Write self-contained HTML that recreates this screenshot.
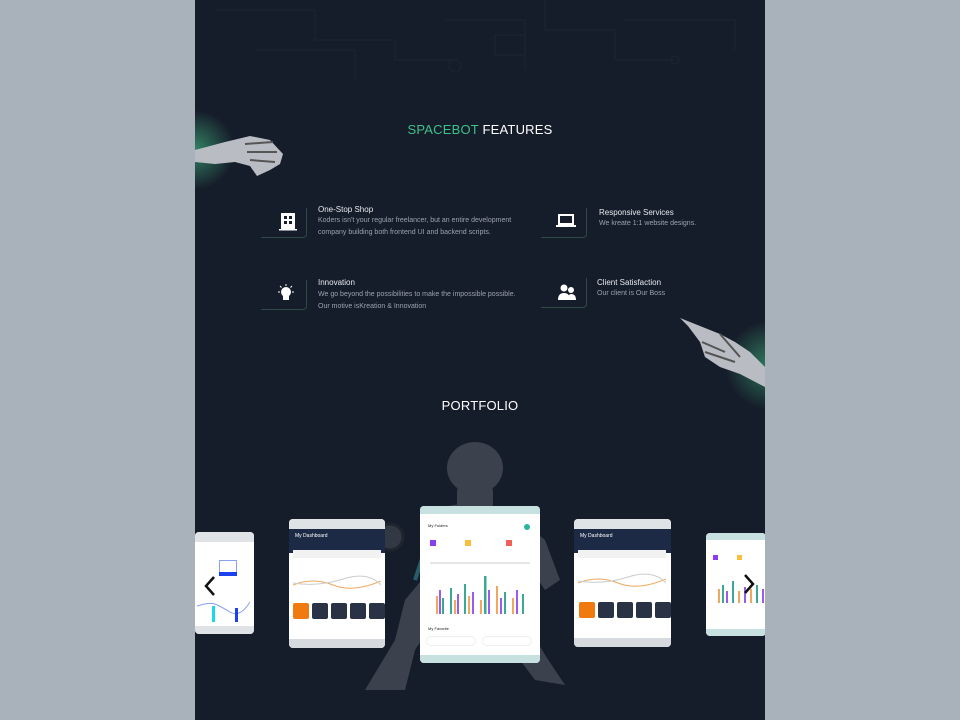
<!DOCTYPE html>
<html><head><meta charset="utf-8">
<style>
*{margin:0;padding:0;box-sizing:border-box}
body{width:960px;height:720px;background:#a9b2bb;font-family:"Liberation Sans",sans-serif;position:relative;overflow:hidden}
#page{position:absolute;left:195px;top:0;width:570px;height:720px;background:#161d2a;overflow:hidden}
.abs{position:absolute}
.h{position:absolute;font-size:13px;color:#fff;letter-spacing:.2px}
.ft{position:absolute;color:#e6e9ee;font-size:8px}
.fd{position:absolute;color:#9aa2ad;font-size:7px;line-height:12px}
.ib{position:absolute;width:46px;height:30px;border-right:1px solid #2e4a45;border-bottom:1px solid #2e4a45;border-radius:0 0 4px 0}
.card{position:absolute;background:#fff;border-radius:4px;overflow:hidden}
</style></head><body>
<div id="page">
 <svg class="abs" style="left:0;top:0" width="570" height="90">
  <g stroke="#1c2431" fill="none" stroke-width="1.2">
   <path d="M20 10H120V40H200V60H260"/><path d="M350 0V30H420V60H480"/><path d="M250 20H330V70"/><path d="M430 20H540V50"/><circle cx="260" cy="66" r="6"/><circle cx="480" cy="60" r="4"/><path d="M60 50H160V80"/><rect x="300" y="35" width="30" height="20"/>
  </g>
 </svg>
 <div class="abs" style="left:-40px;top:110px;width:80px;height:80px;border-radius:50%;background:radial-gradient(circle,rgba(70,200,140,.6),rgba(22,29,42,0) 70%)"></div>
 <div class="abs" style="left:530px;top:320px;width:90px;height:90px;border-radius:50%;background:radial-gradient(circle,rgba(70,200,140,.55),rgba(22,29,42,0) 70%)"></div>
 <svg class="abs" style="left:0;top:132px" width="95" height="50"><path d="M0 18 L30 10 L55 4 L75 8 L88 22 L85 32 L75 38 L62 44 L55 34 L40 30 L20 32 L0 30Z" fill="#b9bdc3"/><path d="M50 12 L78 10 M52 20 L82 20 M55 28 L80 30" stroke="#555" stroke-width="2"/></svg>
 <svg class="abs" style="left:485px;top:312px" width="85" height="75"><path d="M0 6 L20 14 L40 22 L55 30 L70 40 L85 55 L85 75 L60 62 L40 55 L25 45 L20 30 L8 14Z" fill="#b9bdc3"/><path d="M22 30 L45 40 M25 40 L55 50 M40 22 L60 45" stroke="#555" stroke-width="2"/></svg>
 <div class="h" style="left:0;width:570px;text-align:center;top:122px"><span style="color:#3dc08a">SPACEBOT</span> FEATURES</div>

 <div class="ib" style="left:66px;top:208px"></div>
 <svg class="abs" style="left:84px;top:211px" width="18" height="20"><rect x="2" y="2" width="14" height="16" fill="#fff"/><rect x="5" y="5" width="3" height="3" fill="#161d2a"/><rect x="10" y="5" width="3" height="3" fill="#161d2a"/><rect x="5" y="10" width="3" height="3" fill="#161d2a"/><rect x="10" y="10" width="3" height="3" fill="#161d2a"/><rect x="0" y="18" width="18" height="1.5" fill="#fff"/></svg>
 <div class="ft" style="left:123px;top:205px">One-Stop Shop</div>
 <div class="fd" style="left:123px;top:215px">Koders isn't your regular freelancer, but an entire development<br>company building both frontend UI and backend scripts.</div>

 <div class="ib" style="left:346px;top:208px"></div>
 <svg class="abs" style="left:361px;top:213px" width="20" height="16"><rect x="2" y="1" width="16" height="11" fill="#fff"/><rect x="4" y="3" width="12" height="7" fill="#161d2a"/><rect x="0" y="12" width="20" height="2" fill="#fff"/></svg>
 <div class="ft" style="left:404px;top:208px">Responsive Services</div>
 <div class="fd" style="left:404px;top:218px">We kreate 1:1 website designs.</div>

 <div class="ib" style="left:66px;top:280px"></div>
 <svg class="abs" style="left:82px;top:284px" width="18" height="18"><circle cx="9" cy="8" r="5" fill="#fff"/><rect x="6" y="12" width="6" height="4" fill="#fff"/><g stroke="#fff" stroke-width="1"><path d="M9 0V2M1 8H3M15 8H17M3 2L4.5 3.5M15 2L13.5 3.5"/></g></svg>
 <div class="ft" style="left:123px;top:278px">Innovation</div>
 <div class="fd" style="left:123px;top:289px">We go beyond the possibilities to make the impossible possible.<br>Our motive isKreation &amp; Innovation</div>

 <div class="ib" style="left:346px;top:278px"></div>
 <svg class="abs" style="left:362px;top:283px" width="20" height="18"><circle cx="7" cy="5" r="3.5" fill="#fff"/><circle cx="14" cy="7" r="3" fill="#fff"/><path d="M1 17Q1 10 7 10Q13 10 13 17Z" fill="#fff"/><path d="M11 17Q11 11 14 11Q19 11 19 17Z" fill="#fff"/></svg>
 <div class="ft" style="left:402px;top:278px">Client Satisfaction</div>
 <div class="fd" style="left:402px;top:288px">Our client is Our Boss</div>

 <div class="h" style="left:0;width:570px;text-align:center;top:398px">PORTFOLIO</div>

 <svg class="abs" style="left:140px;top:440px" width="240" height="260" opacity=".8">
  <g fill="#454c58">
   <ellipse cx="140" cy="28" rx="28" ry="26"/>
   <rect x="122" y="40" width="36" height="35" rx="12"/>
   <path d="M100 70 Q140 55 180 75 L210 100 L225 140 L210 150 L190 120 L170 110 L160 170 L120 175 L95 130 L70 160 L60 200 L30 250 L70 250 L80 210 L100 180 L130 190 L170 200 L200 240 L230 245 L210 215 L190 180 L170 150 L100 90Z"/>
  </g>
  <path d="M100 80 L90 110 L80 140 M180 90 L200 110" stroke="#2b6f7a" stroke-width="4" fill="none"/>
  <circle cx="55" cy="97" r="13" fill="#3a414c" stroke="#22282f" stroke-width="3"/>
 </svg>

 <div class="card" style="left:0;top:532px;width:59px;height:102px">
  <div class="abs" style="left:0;top:0;width:59px;height:10px;background:#dfe3e6"></div>
  <div class="abs" style="left:0;bottom:0;width:59px;height:8px;background:#dfe3e6"></div>
  <div class="abs" style="left:24px;top:28px;width:18px;height:16px;border:1px solid #8aa0f0"></div>
  <div class="abs" style="left:24px;top:40px;width:18px;height:4px;background:#1d40f0"></div>
  <svg class="abs" style="left:0;top:62px" width="59" height="30"><path d="M2 12 Q15 8 20 10 T35 18 T55 8" stroke="#8aa0f0" fill="none"/><rect x="17" y="12" width="3" height="16" fill="#18d8f0"/><rect x="40" y="14" width="3" height="14" fill="#1d40f0"/></svg>
 </div>
 <div class="card" style="left:94px;top:519px;width:96px;height:129px">
  <div class="abs" style="left:0;top:0;width:96px;height:10px;background:#dfe3e6"></div>
  <div class="abs" style="left:0;top:10px;width:96px;height:24px;background:#1d2a45"></div>
  <div class="abs" style="left:6px;top:14px;font-size:5px;color:#fff">My Dashboard</div>
  <div class="abs" style="left:4px;top:31px;width:88px;height:8px;background:#f2f2f2"></div>
  <svg class="abs" style="left:4px;top:52px" width="88" height="20"><path d="M0 14 Q20 6 40 14 T88 10" stroke="#f0a860" fill="none"/><path d="M0 12 Q25 16 50 8 T88 14" stroke="#ccc" fill="none"/></svg>
  <div class="abs" style="left:4px;top:84px;width:16px;height:16px;background:#f07a10;border-radius:2px"></div>
  <div class="abs" style="left:23px;top:84px;width:16px;height:16px;background:#2a3346;border-radius:2px"></div>
  <div class="abs" style="left:42px;top:84px;width:16px;height:16px;background:#2a3346;border-radius:2px"></div>
  <div class="abs" style="left:61px;top:84px;width:16px;height:16px;background:#2a3346;border-radius:2px"></div>
  <div class="abs" style="left:80px;top:84px;width:16px;height:16px;background:#2a3346;border-radius:2px"></div>
  <div class="abs" style="left:0;bottom:0;width:96px;height:9px;background:#d6d9dd"></div>
 </div>
 <div class="card" style="left:225px;top:506px;width:120px;height:157px">
  <div class="abs" style="left:0;top:0;width:120px;height:8px;background:#c6e1df"></div>
  <div class="abs" style="left:0;bottom:0;width:120px;height:8px;background:#c6e1df"></div>
  <div class="abs" style="left:8px;top:17px;font-size:4px;color:#222">My Folders</div>
  <div class="abs" style="left:104px;top:18px;width:6px;height:6px;border-radius:50%;background:#2bb59c"></div>
  <div class="abs" style="left:10px;top:34px;width:6px;height:6px;background:#8a3ef0"></div>
  <div class="abs" style="left:45px;top:34px;width:6px;height:6px;background:#f8c03a"></div>
  <div class="abs" style="left:86px;top:34px;width:6px;height:6px;background:#f0605a"></div>
  <div class="abs" style="left:10px;top:56px;width:100px;height:1.5px;background:#e6e6e6"></div>
  <svg class="abs" style="left:14px;top:70px" width="96" height="38"><g>
   <rect x="2" y="20" width="2" height="18" fill="#f0a860"/><rect x="5" y="14" width="2" height="24" fill="#9a5cf0"/><rect x="8" y="22" width="2" height="16" fill="#3aa895"/>
   <rect x="16" y="12" width="2" height="26" fill="#3aa895"/><rect x="20" y="24" width="2" height="14" fill="#f0a860"/><rect x="23" y="18" width="2" height="20" fill="#9a5cf0"/>
   <rect x="30" y="8" width="2" height="30" fill="#3aa895"/><rect x="34" y="20" width="2" height="18" fill="#f0a860"/><rect x="38" y="16" width="2" height="22" fill="#9a5cf0"/>
   <rect x="46" y="24" width="2" height="14" fill="#f0a860"/><rect x="50" y="0" width="2.5" height="38" fill="#3aa895"/><rect x="54" y="14" width="2" height="24" fill="#9a5cf0"/>
   <rect x="62" y="10" width="2" height="28" fill="#f0a860"/><rect x="66" y="22" width="2" height="16" fill="#9a5cf0"/><rect x="70" y="16" width="2" height="22" fill="#3aa895"/>
   <rect x="78" y="22" width="2" height="16" fill="#f0a860"/><rect x="82" y="14" width="2" height="24" fill="#9a5cf0"/><rect x="88" y="18" width="2" height="20" fill="#3aa895"/></g></svg>
  <div class="abs" style="left:8px;top:120px;font-size:4px;color:#222">My Favorite</div>
  <div class="abs" style="left:6px;top:130px;width:50px;height:10px;border:1px solid #eee;border-radius:5px"></div>
  <div class="abs" style="left:62px;top:130px;width:50px;height:10px;border:1px solid #eee;border-radius:5px"></div>
 </div>
 <div class="card" style="left:379px;top:519px;width:97px;height:128px">
  <div class="abs" style="left:0;top:0;width:97px;height:10px;background:#dfe3e6"></div>
  <div class="abs" style="left:0;top:10px;width:97px;height:24px;background:#1d2a45"></div>
  <div class="abs" style="left:6px;top:14px;font-size:5px;color:#fff">My Dashboard</div>
  <div class="abs" style="left:4px;top:31px;width:88px;height:8px;background:#f2f2f2"></div>
  <svg class="abs" style="left:4px;top:50px" width="88" height="20"><path d="M0 14 Q20 6 40 14 T88 10" stroke="#f0a860" fill="none"/><path d="M0 12 Q25 16 50 8 T88 14" stroke="#ccc" fill="none"/></svg>
  <div class="abs" style="left:5px;top:83px;width:16px;height:16px;background:#f07a10;border-radius:2px"></div>
  <div class="abs" style="left:24px;top:83px;width:16px;height:16px;background:#2a3346;border-radius:2px"></div>
  <div class="abs" style="left:43px;top:83px;width:16px;height:16px;background:#2a3346;border-radius:2px"></div>
  <div class="abs" style="left:62px;top:83px;width:16px;height:16px;background:#2a3346;border-radius:2px"></div>
  <div class="abs" style="left:81px;top:83px;width:16px;height:16px;background:#2a3346;border-radius:2px"></div>
  <div class="abs" style="left:0;bottom:0;width:97px;height:9px;background:#d6d9dd"></div>
 </div>
 <div class="card" style="left:511px;top:533px;width:60px;height:103px">
  <div class="abs" style="left:0;top:0;width:60px;height:7px;background:#c6e1df"></div>
  <div class="abs" style="left:0;bottom:0;width:60px;height:7px;background:#c6e1df"></div>
  <div class="abs" style="left:7px;top:22px;width:5px;height:5px;background:#8a3ef0"></div>
  <div class="abs" style="left:31px;top:22px;width:5px;height:5px;background:#f8c03a"></div>
  <svg class="abs" style="left:10px;top:48px" width="50" height="22"><rect x="2" y="8" width="2" height="14" fill="#f0a860"/><rect x="6" y="4" width="2" height="18" fill="#3aa895"/><rect x="10" y="10" width="2" height="12" fill="#9a5cf0"/><rect x="16" y="0" width="2" height="22" fill="#3aa895"/><rect x="22" y="10" width="2" height="12" fill="#f0a860"/><rect x="28" y="6" width="2" height="16" fill="#9a5cf0"/><rect x="34" y="8" width="2" height="14" fill="#f0a860"/><rect x="40" y="4" width="2" height="18" fill="#3aa895"/><rect x="46" y="8" width="2" height="14" fill="#9a5cf0"/></svg>
 </div>
 <svg class="abs" style="left:8px;top:575px" width="14" height="22"><path d="M11 2L3 11L11 20" stroke="#111" stroke-width="2.5" fill="none"/></svg>
 <svg class="abs" style="left:547px;top:573px" width="14" height="22"><path d="M3 2L11 11L3 20" stroke="#111" stroke-width="2.5" fill="none"/></svg>
</div>
</body></html>
